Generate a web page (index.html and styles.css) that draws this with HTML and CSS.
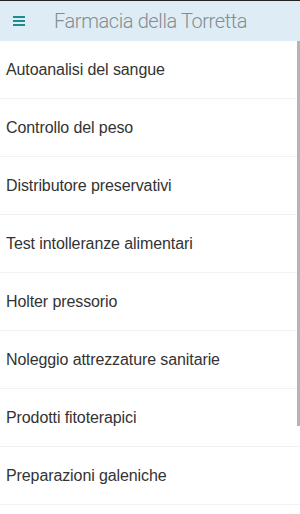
FILE: index.html
```html
<!DOCTYPE html>
<html>
	<head>
		<title>Farmacia della Torretta</title>
		<link rel="stylesheet" href="styles.css">
	</head>
	<body>
		<div class="header">
			<div class="menu">
				<span></span>
				<span></span>
				<span></span>
			</div>
			<h1 class="title">Farmacia della Torretta</h1>
		</div>
		<div class="content">
			<ul class="list">
				<li>Autoanalisi del sangue</li>
				<li>Controllo del peso</li>
				<li>Distributore preservativi</li>
				<li>Test intolleranze alimentari</li>
				<li>Holter pressorio</li>
				<li>Noleggio attrezzature sanitarie</li>
				<li>Prodotti fitoterapici</li>
				<li>Preparazioni galeniche</li>
			</ul>
			<div class="scrollbar"></div>
		</div>
	</body>
</html>
```
FILE: styles.css
```css
html,body{
	margin: 0;
	padding: 0;
	height: 100%;
	overflow: hidden;
	background: #fff;
	font-family: "Liberation Sans", Arial, sans-serif;
}
.header{
	border-top: 1px solid #222;
	background: #deedf5;
	display: flex;
	align-items: center;
	box-sizing: border-box;
	height: 41px;
}
.menu{
	width: 12px;
	margin-left: 13px;
	display: flex;
	flex-direction: column;
	gap: 2px;
	margin-top: -1px;
}
.menu span{
	display: block;
	height: 2px;
	background: #1c8c8c;
}
.title{
	margin: 0 0 0 29px;
	font-family: Roboto, "Liberation Sans", sans-serif;
	font-weight: 300;
	font-size: 20px;
	color: #858b90;
	letter-spacing: -0.4px;
}
.content{
	position: relative;
}
.list{
	list-style: none;
	margin: 0;
	padding: 0;
}
.list li{
	height: 57px;
	border-bottom: 1px solid #f2f2f2;
	display: flex;
	align-items: center;
	padding-left: 6px;
	font-size: 16px;
	color: #333;
	letter-spacing: -0.1px;
}
.scrollbar{
	position: absolute;
	top: 0;
	right: 0;
	width: 3px;
	height: 385px;
	background: #b4b4b4;
}
```
